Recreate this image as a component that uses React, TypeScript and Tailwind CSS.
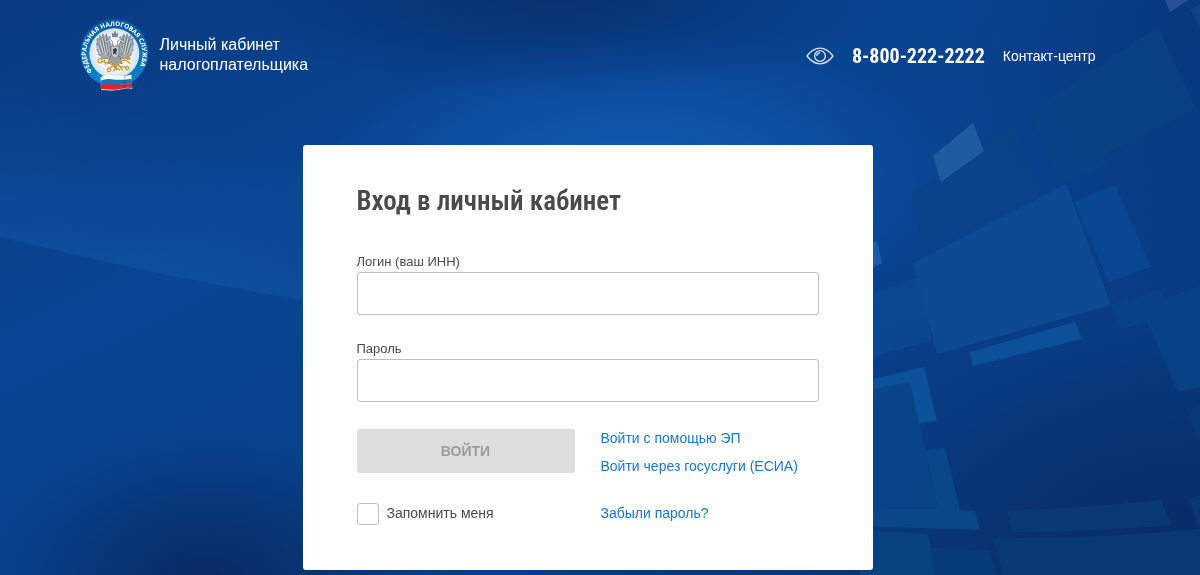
import React, { useState } from 'react';

const Backdrop: React.FC = () => (
  <svg
    className="absolute inset-0 h-full w-full"
    viewBox="0 0 1200 575"
    preserveAspectRatio="xMidYMin slice"
    aria-hidden="true"
  >
    <defs>
      <linearGradient id="base" x1="0" y1="0" x2="1" y2="1">
        <stop offset="0" stopColor="#0a3a80" />
        <stop offset="0.3" stopColor="#094592" />
        <stop offset="0.6" stopColor="#09428e" />
        <stop offset="1" stopColor="#08306e" />
      </linearGradient>
      <radialGradient id="glow">
        <stop offset="0" stopColor="#1362bd" stopOpacity="0.85" />
        <stop offset="1" stopColor="#1362bd" stopOpacity="0" />
      </radialGradient>
      <radialGradient id="shade">
        <stop offset="0" stopColor="#072459" stopOpacity="0.9" />
        <stop offset="1" stopColor="#072459" stopOpacity="0" />
      </radialGradient>
      <linearGradient id="beam" gradientUnits="userSpaceOnUse" x1="170" y1="120" x2="130" y2="275">
        <stop offset="0" stopColor="#1160b4" stopOpacity="0" />
        <stop offset="1" stopColor="#1160b4" stopOpacity="0.35" />
      </linearGradient>
    </defs>

    <rect width="1200" height="575" fill="url(#base)" />
    <ellipse cx="640" cy="180" rx="320" ry="150" fill="url(#glow)" />
    <ellipse cx="560" cy="-10" rx="330" ry="110" fill="url(#shade)" opacity="0.7" />
    <ellipse cx="210" cy="580" rx="230" ry="150" fill="url(#shade)" opacity="0.9" />
    <ellipse cx="1190" cy="30" rx="240" ry="260" fill="url(#shade)" opacity="0.4" />
    <ellipse cx="1140" cy="520" rx="260" ry="180" fill="url(#shade)" opacity="0.45" />
    <path d="M0 90 L420 90 L420 318 Q200 287 0 237 Z" fill="url(#beam)" />

    <g opacity="0.9">
      <path d="M911 195 L1012 123 L1040 195 L924 250 Z" fill="#0d4485" opacity="0.6" />
      <path d="M1030 112 L1158 27 L1195 108 L1103 155 L1106 165 L1061 184 Z" fill="#0e4584" opacity="0.75" />
      <path d="M1165 0 L1189 0 L1170 12 Z" fill="#2b5596" />
      <path d="M1190 10 L1200 4 L1200 27 Z" fill="#0d4a87" opacity="0.8" />
      <path d="M933 156 L973 123 L984 151 L941 182 Z" fill="#225f9f" />
      <path d="M860 247 L877 241 L882 263 L860 274 Z" fill="#1c60a8" />
      <path d="M860 298 L919 277 L932 340 L860 361 Z" fill="#0c4c95" opacity="0.8" />
      <path d="M913 263 L1066 184 L1111 305 L937 354 Z" fill="#104c92" />
      <path d="M1074 202 L1115 185 L1151 267 L1109 282 Z" fill="#0a4a93" />
      <path d="M1111 305 L1160 290 L1165 298 L1200 286 L1200 387 L1178 392 L1147 322 L1121 329 Z" fill="#0a4586" />
      <path d="M970 352 L1075 322 L1082 339 L973 366 Z" fill="#0d539c" />
      <path d="M860 392 L910 382 L938 509 L860 508 Z" fill="#0b4787" />
      <path d="M860 382 L924 367 L937 421 L919 423 L910 382 L860 392 Z" fill="#0d559d" />
      <path d="M925 450 L945 448 L960 510 L975 511 L980 530 L860 526 L860 508 L938 509 Z" fill="#0b4a8a" />
      <path d="M860 530 L928 534 L936 575 L860 575 Z" fill="#0b4483" />
      <path d="M930 548 L989 551 L997 575 L935 575 Z" fill="#0a3d7a" />
      <path d="M1007 510 Q1090 508 1161 500 L1171 525 Q1090 532 1013 532 Z" fill="#0b3c76" />
      <path d="M993 538 Q1100 539 1200 529 L1200 575 L1003 575 Z" fill="#0b3c76" />
      <path d="M1189 498 L1200 496 L1200 527 L1198 525 Z" fill="#0b3c76" />
      <path d="M1187 410 L1200 406 L1200 440 Z" fill="#0a3b7a" />
    </g>
  </svg>
);

const EagleHalf: React.FC = () => (
  <g stroke="#6d747e" strokeWidth="2">
    <path d="M126 104 L114 98 L106 72 L100 84 L96 72 L92 84 L86 76 L84 90 L78 84 L79 100 L76 100 L80 116 L77 118 L84 130 L82 134 L92 140 L92 146 L112 146 L126 160 Z" fill="#a3a9b1" />
    <path d="M98 84 L106 126 M90 86 L100 130 M83 98 L94 134 M106 84 L112 136" stroke="#555c66" fill="none" />
    <path d="M102 82 L110 128 M94 86 L104 134 M86 94 L97 130 M80 108 L90 132" stroke="#e8ebee" fill="none" />
    <path d="M124 124 L118 112 L120 102 L114 96 L104 100 L108 92 L116 88 L125 94 Z" fill="#eef0f2" />
    <path d="M108 88 L107 80 L112 83 L116 78 L119 84 Z" fill="#c9ced4" />
    <circle cx="115" cy="94" r="2" fill="#333a44" stroke="none" />
  </g>
);

const TaxServiceEmblem: React.FC = () => (
  <svg viewBox="27 24 207 222" className="h-[74px] w-[69px] shrink-0" role="img" aria-label="ФНС">
    <defs>
      <linearGradient id="ring" x1="0" y1="0" x2="0" y2="1">
        <stop offset="0" stopColor="#0b559f" />
        <stop offset="1" stopColor="#0b88cf" />
      </linearGradient>
      <radialGradient id="disc">
        <stop offset="0.5" stopColor="#ffffff" />
        <stop offset="1" stopColor="#cfe3f3" />
      </radialGradient>
      <path id="ringText" d="M65 185 A84 84 0 1 1 206 168 L190 200" />
    </defs>
    <circle cx="130" cy="128" r="102" fill="url(#ring)" />
    <circle cx="130" cy="130" r="75" fill="url(#disc)" />
    <text fill="#ffffff" fontSize="19" fontWeight="700" fontFamily="Open Sans, sans-serif">
      <textPath href="#ringText">ФЕДЕРАЛЬНАЯ НАЛОГОВАЯ СЛУЖБА</textPath>
    </text>

    <EagleHalf />
    <g transform="translate(264 0) scale(-1 1)">
      <EagleHalf />
    </g>
    <path d="M125 80 L124 70 L130 74 L132 64 L134 74 L140 70 L139 80 Z" fill="#8b929b" stroke="#555c66" strokeWidth="2" />
    <path d="M118 138 L110 162 L122 158 L132 176 L142 158 L154 162 L146 138 Z" fill="#9aa0a8" stroke="#5f6670" strokeWidth="2" />
    <path d="M120 108 H144 V130 Q142 142 132 146 Q122 142 120 130 Z" fill="#c6cbd0" stroke="#59606a" strokeWidth="2" />
    <path d="M126 118 l8 -4 l5 6 l-4 6 l3 8 l-8 -4 l-5 5 l2 -9 z" fill="#343a42" />
    <g fill="none" stroke="#d39a36" strokeWidth="4" strokeLinecap="round">
      <circle cx="87" cy="152" r="6" />
      <path d="M92 154 L110 158 L122 148 M100 150 l4 14" />
      <path d="M112 176 L168 144 M120 164 L166 172 M140 160 L154 180 M154 142 L176 160" />
      <circle cx="114" cy="180" r="5" />
      <circle cx="172" cy="144" r="5" />
      <circle cx="168" cy="174" r="5" />
      <path d="M128 182 q10 -10 18 -2 M132 168 l8 10" />
    </g>

    <path d="M89 202 Q104 192 124 197 T181 194 L184 236 Q166 233 152 238 T90 240 Z" fill="#ffffff" />
    <path d="M89 212 Q104 204 124 208 T182 206 L183 222 Q166 219 150 224 T89 228 Z" fill="#1774b9" />
    <path d="M89 226 Q104 219 124 223 T183 220 L183 234 Q166 231 152 236 T90 238 Z" fill="#e0242c" />
    <path d="M158 196 L166 195 L164 234 L156 236 Z" fill="#40222c" opacity="0.2" />
  </svg>
);

const EyeIcon: React.FC = () => (
  <svg viewBox="0 0 28 18" className="h-[18px] w-7" fill="none" stroke="#dce8f8" strokeWidth="1.300" aria-hidden="true">
    <path d="M1 9 Q7 1.200 14 1.200 Q21 1.200 27 9 Q21 16.800 14 16.800 Q7 16.800 1 9 Z" strokeLinejoin="round" />
    <circle cx="14" cy="9" r="5.400" />
    <path d="M10.800 9 A3.200 3.200 0 0 1 14 5.800" />
  </svg>
);

const App: React.FC = () => {
  const [login, setLogin] = useState('');
  const [password, setPassword] = useState('');
  const [remember, setRemember] = useState(false);

  const handleSubmit = (e: React.FormEvent) => {
    e.preventDefault();
  };

  const inputClass =
    'block h-[43px] w-full rounded-[3px] border border-[#bdbdbd] bg-white px-3 text-base text-[#4a4a4a] outline-none focus:border-[#1976d2]';

  return (
    <div className="relative min-h-screen overflow-hidden bg-[#094492] font-['Liberation_Sans',Arial,sans-serif]">
      <Backdrop />

      <div className="relative pr-[25px]">
        <header className="mx-auto flex w-full max-w-[1016px] items-start justify-between pt-[18px] text-white">
          <a href="#" className="flex items-center gap-[11px]">
            <TaxServiceEmblem />
            <span className="text-base leading-5">
              Личный кабинет
              <br />
              налогоплательщика
            </span>
          </a>
          <div className="flex h-[76px] items-center gap-[18px]">
            <button type="button" aria-label="Версия для слабовидящих">
              <EyeIcon />
            </button>
            <a href="tel:88002222222" className="font-['Roboto_Condensed',sans-serif] text-xl font-bold">
              8-800-222-2222
            </a>
            <a href="#" className="text-sm">Контакт-центр</a>
          </div>
        </header>

        <main className="mx-auto mt-[51px] w-full max-w-[570px] rounded-[3px] bg-white px-[54px] pt-9 pb-[45px] text-[#4a4a4a]">
          <h1 className="font-['Roboto_Condensed',sans-serif] text-[27px] leading-10 font-semibold">
            Вход в личный кабинет
          </h1>

          <form onSubmit={handleSubmit} className="mt-[31px]">
            <label htmlFor="login" className="block text-[13px] leading-5">Логин (ваш ИНН)</label>
            <input id="login" type="text" value={login} onChange={(e) => setLogin(e.target.value)} className={inputClass} />

            <label htmlFor="password" className="mt-6 block text-[13px] leading-5">Пароль</label>
            <input
              id="password"
              type="password"
              value={password}
              onChange={(e) => setPassword(e.target.value)}
              className={inputClass}
            />

            <div className="mt-[27px] flex gap-[26px]">
              <button
                type="submit"
                disabled={!login || !password}
                className="h-11 w-[218px] rounded-[3px] bg-[#1976d2] text-sm font-bold text-white disabled:bg-[#dedede] disabled:text-[#9b9b9b]"
              >
                ВОЙТИ
              </button>
              <div className="flex flex-col gap-[10px] text-sm leading-[18px] text-[#1976d2]">
                <a href="#">Войти с помощью ЭП</a>
                <a href="#">Войти через госуслуги (ЕСИА)</a>
              </div>
            </div>

            <div className="mt-[28px] flex gap-[26px] text-sm leading-5">
              <label className="flex w-[218px] gap-2">
                <input
                  type="checkbox"
                  checked={remember}
                  onChange={(e) => setRemember(e.target.checked)}
                  className="size-[22px] appearance-none rounded-[3px] border border-[#bdbdbd] bg-white checked:bg-[#1976d2]"
                />
                Запомнить меня
              </label>
              <a href="#" className="text-[#1976d2]">Забыли пароль?</a>
            </div>
          </form>
        </main>
      </div>
    </div>
  );
};

export default App;
